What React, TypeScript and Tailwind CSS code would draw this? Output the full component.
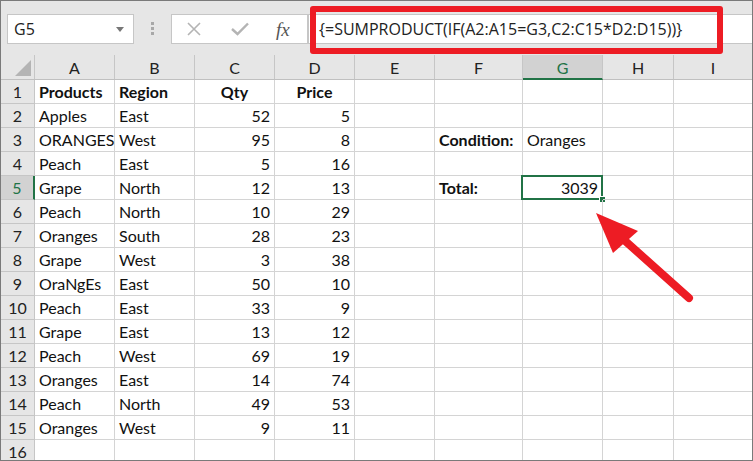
import * as React from "react"

type Col = { label: string; w: string }

const cols: Col[] = [
  { label: "A", w: "w-[80px]" },
  { label: "B", w: "w-[80px]" },
  { label: "C", w: "w-[80px]" },
  { label: "D", w: "w-[80px]" },
  { label: "E", w: "w-[80px]" },
  { label: "F", w: "w-[88px]" },
  { label: "G", w: "w-[80px]" },
  { label: "H", w: "w-[71px]" },
  { label: "I", w: "w-[79px]" },
]

type CellVal = { text?: string; align?: "left" | "right" | "center"; bold?: boolean; selected?: boolean }

const data: [string, string, number, number][] = [
  ["Apples", "East", 52, 5],
  ["ORANGES", "West", 95, 8],
  ["Peach", "East", 5, 16],
  ["Grape", "North", 12, 13],
  ["Peach", "North", 10, 29],
  ["Oranges", "South", 28, 23],
  ["Grape", "West", 3, 38],
  ["OraNgEs", "East", 50, 10],
  ["Peach", "East", 33, 9],
  ["Grape", "East", 13, 12],
  ["Peach", "West", 69, 19],
  ["Oranges", "East", 14, 74],
  ["Peach", "North", 49, 53],
  ["Oranges", "West", 9, 11],
]

function buildRows(): CellVal[][] {
  const rows: CellVal[][] = []
  rows.push([
    { text: "Products", bold: true },
    { text: "Region", bold: true },
    { text: "Qty", bold: true, align: "center" },
    { text: "Price", bold: true, align: "center" },
  ])
  data.forEach(([p, r, q, pr]) => {
    rows.push([{ text: p }, { text: r }, { text: String(q), align: "right" }, { text: String(pr), align: "right" }])
  })
  rows.push([])
  // Condition / Total block
  rows[2][5] = { text: "Condition:", bold: true }
  rows[2][6] = { text: "Oranges" }
  rows[4][5] = { text: "Total:", bold: true }
  rows[4][6] = { text: "3039", align: "right", selected: true }
  return rows
}

function Cell({ col, val }: { col: Col; val?: CellVal }) {
  const align = val?.align === "right" ? "justify-end" : val?.align === "center" ? "justify-center" : "justify-start"
  return (
    <div className={`relative ${col.w} shrink-0 h-[24px] border-r border-b border-[#d4d4d4] px-[4px] flex items-center pt-[1px] ${align}`}>
      {val?.text && <span className={`whitespace-nowrap ${val.bold ? "font-bold" : ""}`}>{val.text}</span>}
      {val?.selected && (
        <>
          <div className="absolute -left-[2px] -top-[1px] -right-[1px] -bottom-[1px] border-2 border-[#217346]" />
          <div className="absolute -right-[4px] -bottom-[4px] w-[7px] h-[7px] bg-[#217346] border border-white" />
        </>
      )}
    </div>
  )
}

export default function App() {
  const rows = buildRows()
  return (
    <div className="relative w-[753px] h-[461px] overflow-hidden bg-white border border-[#7a7a7a] text-[16px] text-[#111]" style={{ fontFamily: "Lato, 'Liberation Sans', sans-serif" }}>
      {/* formula bar */}
      <div className="h-[54px] bg-[#e6e6e6] flex items-start pt-[13px]">
        <div className="ml-[6px] w-[127px] h-[30px] bg-white border border-[#c6c6c6] flex items-center pl-[6px] pr-[9px] text-[#222]" style={{ fontFamily: "'Open Sans', sans-serif", fontSize: 16 }}>
          <span>G5</span>
          <span className="ml-auto w-0 h-0 border-l-[4px] border-r-[4px] border-t-[5px] border-l-transparent border-r-transparent border-t-[#777]" />
        </div>
        <div className="ml-[17px] mt-[8px] flex flex-col gap-[2px]">
          <div className="w-[3px] h-[3px] bg-[#a8a8a8]" />
          <div className="w-[3px] h-[3px] bg-[#a8a8a8]" />
          <div className="w-[3px] h-[3px] bg-[#a8a8a8]" />
        </div>
        <div className="ml-[17px] w-[137px] h-[30px] bg-white border border-[#c6c6c6] flex items-center">
          <svg width="14" height="14" viewBox="0 0 14 14" className="ml-[15px]">
            <path d="M1 1 L13 13 M13 1 L1 13" stroke="#b4b4b4" strokeWidth="1.6" />
          </svg>
          <svg width="18" height="14" viewBox="0 0 18 14" className="ml-[30px]">
            <path d="M1 7 L6.5 12 L17 1.5" stroke="#b4b4b4" strokeWidth="2.4" fill="none" />
          </svg>
          <span className="ml-[27px] italic text-[#555] text-[19px] leading-none" style={{ fontFamily: "'Liberation Serif', serif" }}>
            fx
          </span>
        </div>
        <div className="flex-1 h-[30px] bg-white border border-[#c6c6c6] border-r-0 flex items-center pl-[10px] text-[#222]" style={{ fontFamily: "'Open Sans', sans-serif", fontSize: 16 }}>
          {"{=SUMPRODUCT(IF(A2:A15=G3,C2:C15*D2:D15))}"}
        </div>
      </div>

      {/* column headers */}
      <div className="flex h-[25px] bg-[#e6e6e6] border-b border-[#c0c0c0]">
        <div className="relative w-[34px] shrink-0 border-r border-[#c6c6c6]">
          <svg width="16" height="16" viewBox="0 0 16 16" className="absolute right-[3px] bottom-[3px]">
            <path d="M16 0 L16 16 L0 16 Z" fill="#b4b4b4" />
          </svg>
        </div>
        {cols.map((c) => (
          <div
            key={c.label}
            className={`${c.w} shrink-0 border-r border-[#c6c6c6] flex items-center justify-center pt-[2px] ${
              c.label === "G" ? "bg-[#d2d2d2] text-[#217346] border-b-2 border-b-[#217346] -mb-[1px]" : "text-[#222]"
            }`}
          >
            {c.label}
          </div>
        ))}
      </div>

      {/* rows */}
      {rows.map((r, i) => (
        <div key={i} className="flex">
          <div
            className={`w-[34px] shrink-0 h-[24px] border-b border-[#c6c6c6] flex items-center justify-center pt-[1px] ${
              i === 4 ? "bg-[#d2d2d2] text-[#217346] border-r-2 border-r-[#217346]" : "bg-[#e6e6e6] text-[#222] border-r border-r-[#c6c6c6]"
            }`}
          >
            {i + 1}
          </div>
          {cols.map((c, j) => (
            <Cell key={c.label} col={c} val={r[j]} />
          ))}
        </div>
      ))}

      {/* annotations */}
      <div className="absolute left-[309px] top-[5px] w-[413px] h-[48px] border-[6px] border-[#ed1c24] rounded-[3px] pointer-events-none" />
      <svg className="absolute inset-0 pointer-events-none" width="753" height="461" viewBox="0 0 753 461">
        <line x1="688" y1="297" x2="622" y2="238" stroke="#ed1c24" strokeWidth="8" strokeLinecap="round" />
        <polygon points="595,212 637,230 612,252" fill="#ed1c24" />
      </svg>
    </div>
  )
}
